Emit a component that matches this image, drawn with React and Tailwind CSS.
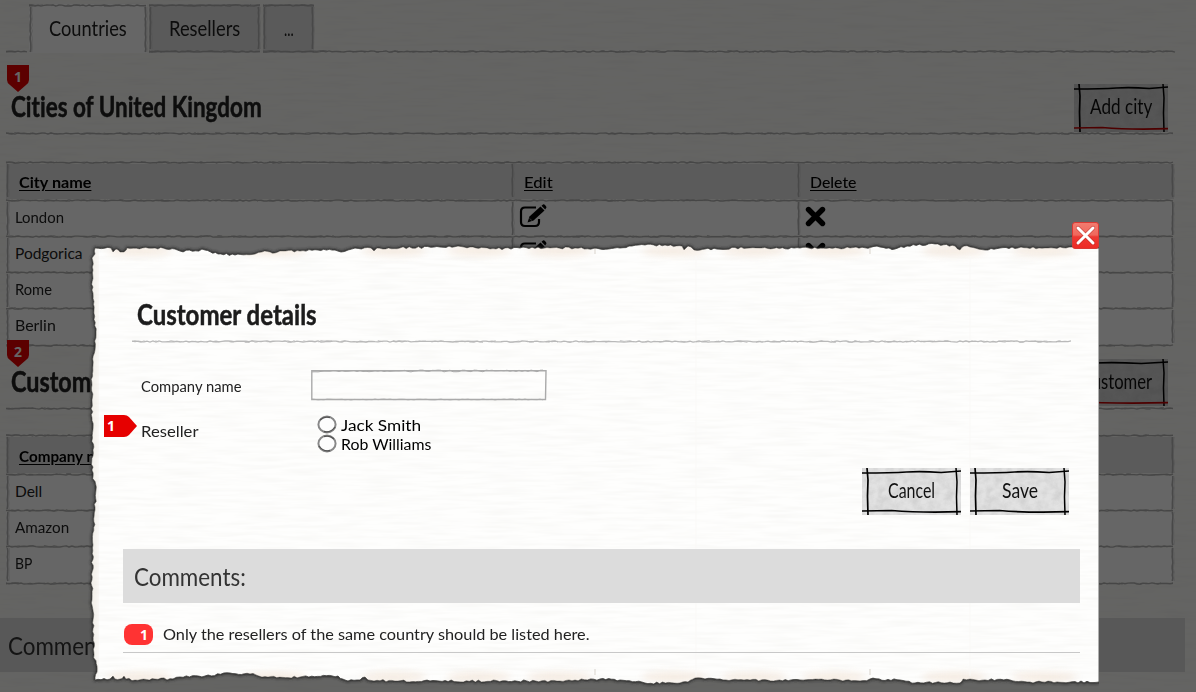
import React, { useLayoutEffect, useRef, useState } from "react";

function makeRandom(seed) {
  let s = seed * 9301 + 49297;
  return () => {
    s = (s * 16807 + 11) % 2147483647;
    return s / 2147483647;
  };
}

// Label whose glyphs are condensed or widened to a set width.
function Label({ w, className = "", children }) {
  const ref = useRef(null);
  const [k, setK] = useState(1);
  useLayoutEffect(() => {
    setK(w / ref.current.offsetWidth);
  }, [w]);
  return (
    <span className="inline-block shrink-0 text-left" style={{ width: w }}>
      <span
        ref={ref}
        className={`inline-block origin-left whitespace-nowrap ${className}`}
        style={{ transform: `scaleX(${k})` }}
      >
        {children}
      </span>
    </span>
  );
}

function wobble(length, seed, amp) {
  const r = makeRandom(seed);
  let d = "";
  for (let i = 0; i <= length; i += 3) {
    d += `${i ? "L" : "M"}${i} ${(1.5 + (r() - 0.5) * amp).toFixed(2)} `;
  }
  return d;
}

function HLine({ w, seed = 1, color = "#b0b0b0", sw = 1.4 }) {
  return (
    <svg width={w} height="3" className="block shrink-0 overflow-visible">
      <path d={wobble(w, seed, 1.2)} fill="none" stroke={color} strokeWidth={sw} />
      <path d={wobble(w, seed + 31, 2)} fill="none" stroke={color} strokeWidth="0.8" strokeDasharray="14 9 5 11" />
    </svg>
  );
}

function VLine({ h, seed = 1, color = "#b3b3b3" }) {
  return (
    <svg width="3" height={h} className="block shrink-0 overflow-visible">
      <g transform="matrix(0 1 1 0 0 0)">
        <path d={wobble(h, seed, 0.8)} fill="none" stroke={color} strokeWidth="1.6" />
        <path d={wobble(h, seed + 7, 1)} transform="translate(0 1.4)" fill="none" stroke="#d2d2d2" strokeWidth="0.7" />
      </g>
    </svg>
  );
}

function PinBadge({ n }) {
  return (
    <div className="relative h-[27px] w-[22px] shrink-0">
      <svg width="22" height="27" className="absolute inset-0">
        <path d="M0 0H22V15Q22 18 19 20L11 27L3 20Q0 18 0 15Z" fill="#e60000" />
      </svg>
      <span className="relative block text-center font-['Open_Sans',sans-serif] text-[14px] leading-[23px] font-bold text-white">
        {n}
      </span>
    </div>
  );
}

function SketchButton({ w, h = 47, textW, bottom = "#000", tone = "#e2e2e2", id, children }) {
  return (
    <button className="relative flex shrink-0 items-center justify-center" style={{ width: w, height: h }}>
      <svg width={w} height={h} className="absolute inset-0">
        <filter id={id}>
          <feTurbulence type="fractalNoise" baseFrequency="0.12 0.14" numOctaves="4" seed="4" />
          <feColorMatrix values="0 0 0 0 0.5  0 0 0 0 0.5  0 0 0 0 0.5  0.7 0.4 0 0 -0.4" />
        </filter>
        <rect width={w} height={h} fill={tone} />
        <rect width={w} height={h} filter={`url(#${id})`} />
        <g fill="none" stroke="#000" strokeWidth="1.7">
          <path d={`M0 5Q${w * 0.3} 5 ${w * 0.45} 4T${w * 0.8} 4.5L${w} 3`} />
          <path d={`M5 0L6 12L5.5 28L6 ${h}`} />
          <path d={`M${w - 5} 0L${w - 4} 14L${w - 4.5} 29L${w - 4} ${h}`} strokeWidth="1.5" />
          <path d={`M0 ${h - 4}L${w * 0.3} ${h - 4.5}Q${w * 0.6} ${h - 2} ${w} ${h - 3.3}`} stroke={bottom} />
        </g>
      </svg>
      <span className="relative -mt-[4px] font-['Lato',sans-serif] text-[21px] leading-6 text-[#111]">
        <Label w={textW}>{children}</Label>
      </span>
    </button>
  );
}

function EditIcon() {
  return (
    <svg width="28" height="24" viewBox="0 0 28 24" className="shrink-0">
      <path d="M17 3.500H6Q2 3.500 2 7.500V18Q2 22 6 22H16Q20 22 20 18V15" fill="none" stroke="#000" strokeWidth="2.200" />
      <path d="M8.500 18.500L10.500 12.500L21.500 2.500L25.500 6.500L14.500 16.500Z" fill="#000" />
      <path d="M22.500 1.800L24 .5Q25 0 26 1L27 2.200Q28 3.300 27 4.300L26.200 5.500Z" fill="#000" />
      <path d="M10.500 14.500L13 16.500" stroke="#777" strokeWidth="1" />
    </svg>
  );
}

function DeleteIcon() {
  return (
    <svg width="21" height="21" viewBox="0 0 21 21" className="shrink-0">
      <path d="M3.500 3.500L17.500 17.500M17.500 3.500L3.500 17.500" stroke="#000" strokeWidth="5.400" strokeLinecap="round" />
    </svg>
  );
}

function Row({ h, seed, first, bg = "bg-white", cells = [null, null] }) {
  return (
    <div className={`flex items-center ${bg}`}>
      <VLine h={h} seed={seed} />
      <div className="flex w-[502px] items-center">{first}</div>
      <VLine h={h} seed={seed + 1} />
      <div className="flex w-[283px] items-center">{cells[0]}</div>
      <VLine h={h} seed={seed + 2} />
      <div className="flex w-[371px] items-center">{cells[1]}</div>
      <VLine h={h} seed={seed + 3} />
    </div>
  );
}

const body = "font-['Lato',sans-serif] text-[15.500px] leading-5 text-[#222]";

function Head({ w, bold, children }) {
  return (
    <div className={`pt-px pl-[10px] ${body}`}>
      <Label w={w} className={bold ? "font-bold text-black underline underline-offset-2" : "font-medium text-black underline underline-offset-2"}>
        {children}
      </Label>
    </div>
  );
}

function Table({ title, titleW, extra, rows, seed, headH }) {
  return (
    <div className="w-[1168px]">
      <HLine w={1168} seed={seed} />
      <Row h={headH} seed={seed + 2} bg="bg-[#e3e3e3]" first={<Head w={titleW} bold>{title}</Head>} cells={extra} />
      <HLine w={1168} seed={seed + 3} />
      {rows.map(([name, w], i) => (
        <React.Fragment key={name}>
          <Row
            h={i === rows.length - 1 ? 34 : 33}
            seed={seed + i * 5 + 8}
            first={
              <div className={`${i === rows.length - 1 ? "-mt-[5px]" : "-mt-[3px]"} pl-[6px] ${body}`}>
                <Label w={w}>{name}</Label>
              </div>
            }
            cells={[
              <div className="-mt-[5px] pl-[5px]"><EditIcon /></div>,
              <div className="-mt-[5px] pl-[5px]"><DeleteIcon /></div>,
            ]}
          />
          <HLine w={1168} seed={seed + i * 3 + 4} />
        </React.Fragment>
      ))}
    </div>
  );
}

function Tab({ w, textW, active, seed, children }) {
  return (
    <div className={`flex flex-col ${active ? "bg-white" : "bg-[#e0e0e0]"}`} style={{ width: w }}>
      <HLine w={w} seed={seed} />
      <div className="flex items-center justify-between">
        <VLine h={active ? 46 : 43} seed={seed} />
        <span className={`font-['Lato',sans-serif] text-[22px] leading-6 text-[#222] ${active ? "-mt-[4px]" : "-mt-px"}`}>
          <Label w={textW}>{children}</Label>
        </span>
        <VLine h={active ? 46 : 43} seed={seed + 4} />
      </div>
      {!active && <HLine w={w} seed={seed + 1} />}
    </div>
  );
}

const TOP = [[95,248],[111,248],[113,252],[116,249],[120,252],[124,252],[127,248],[155,248],[175,249],[180,251],[205,250],[218,254],[235,255],[255,254],[262,252],[270,252],[275,253],[280,251],[300,251],[318,250],[335,250],[341,252],[348,250],[355,248],[371,248],[374,251],[377,248],[400,248],[440,247],[470,247],[490,249],[520,248],[550,248],[575,248],[600,249],[620,248],[632,246],[645,245],[665,245],[682,246],[684,250],[688,246],[694,250],[705,249],[750,248],[800,248],[850,248],[880,247],[895,249],[907,246],[935,244],[955,246],[960,250],[964,246],[970,247],[985,250],[1000,248],[1099,248]];
const BOTTOM = [[1099,682],[1030,682],[1010,680],[985,680],[970,679],[963,679],[960,683],[950,682],[915,683],[900,680],[870,679],[860,681],[840,680],[800,680],[750,680],[705,679],[695,678],[688,682],[680,683],[645,683],[620,680],[600,679],[575,680],[560,681],[430,681],[395,681],[368,680],[365,677],[360,680],[345,680],[338,676],[300,677],[268,677],[250,674],[230,673],[205,676],[180,677],[173,679],[155,679],[135,680],[126,679],[124,676],[120,679],[115,679],[113,676],[110,679],[95,680]];
const LEFT = [[97,672],[94,655],[93,620],[92,600],[92,580],[93,545],[95,510],[96,490],[92,470],[93,450],[92,400],[92,385],[93,365],[95,350],[96,335],[94,310],[92,290],[93,270],[92,258],[95,254]];

function tornPath() {
  const r = makeRandom(17);
  const pts = [...TOP, ...BOTTOM, ...LEFT];
  let d = "";
  pts.forEach(([x, y], i) => {
    const [nx, ny] = pts[(i + 1) % pts.length];
    const straight = x === 1099 && nx === 1099;
    const steps = straight ? 1 : Math.max(1, Math.round(Math.hypot(nx - x, ny - y) / 3));
    for (let k = 0; k < steps; k++) {
      const j = k ? (r() - 0.5) * 2.2 : 0;
      const vertical = Math.abs(ny - y) > Math.abs(nx - x);
      const px = x + ((nx - x) * k) / steps + (vertical ? j : 0) - 84;
      const py = y + ((ny - y) * k) / steps + (vertical ? 0 : j) - 236;
      d += `${d ? "L" : "M"}${px.toFixed(1)} ${py.toFixed(1)}`;
    }
  });
  return d + "Z";
}
const TORN = tornPath();

function Paper() {
  return (
    <svg width="1015" height="456" className="absolute inset-0">
      <defs>
        <clipPath id="torn"><path d={TORN} /></clipPath>
        <filter id="soft" x="-5%" y="-5%" width="110%" height="110%"><feGaussianBlur stdDeviation="1.7" /></filter>
        <filter id="grain" x="0" y="0" width="100%" height="100%">
          <feTurbulence type="fractalNoise" baseFrequency="0.025 0.28" numOctaves="2" seed="8" />
          <feColorMatrix values="0 0 0 0 0.5  0 0 0 0 0.48  0 0 0 0 0.42  0.16 0 0 0 -0.06" />
        </filter>
        <filter id="stain" x="-20%" y="-100%" width="140%" height="300%"><feGaussianBlur stdDeviation="3.5" /></filter>
      </defs>
      <path d={TORN} fill="#222" stroke="#222" strokeWidth="2" filter="url(#soft)" />
      <path d={TORN} fill="#fefefd" stroke="#3a3a38" strokeWidth="0.8" />
      <g clipPath="url(#torn)">
        <rect width="1015" height="456" filter="url(#grain)" />
        <g filter="url(#stain)" fill="#f3e6da" opacity="0.75">
          {[55, 190, 310, 395, 475, 590, 670, 750, 870, 960].map((x) => (
            <g key={x}>
              <ellipse cx={x} cy="15" rx="32" ry="5" />
              <ellipse cx={x} cy="441" rx="32" ry="5" />
            </g>
          ))}
        </g>
        <rect x="4" y="12" width="9" height="430" fill="#eae4dc" opacity="0.6" filter="url(#stain)" />
        <path d="M612 20V440M886 20V440" stroke="#faf9f7" />
        <path d="M511 11v7M786 11v7M511 433v6M786 433v6" stroke="#c8c2b7" strokeWidth="0.7" />
      </g>
    </svg>
  );
}

function Radio({ flip }) {
  return (
    <svg width="20" height="19" viewBox="0 0 20 19" className={flip ? "-scale-x-100" : ""}>
      <ellipse cx="10" cy="9.500" rx="8.600" ry="7.900" fill="#fdfdfd" stroke="#888" strokeWidth="2" />
      <path d="M3 5Q7 1 13 2.500M18 12Q14 18 7 16.500" fill="none" stroke="#555" strokeWidth="1.300" />
    </svg>
  );
}

function RadioRow({ w, flip, children }) {
  return (
    <label className={`flex h-[19px] items-center gap-[4px] ${body}`}>
      <Radio flip={flip} />
      <span className="text-black"><Label w={w}>{children}</Label></span>
    </label>
  );
}

function Dialog() {
  return (
    <section className="absolute top-[236px] left-[84px] h-[456px] w-[1015px]">
      <Paper />
      <div className="relative flex flex-col pt-[60px]">
        <h2 className="h-[44px] pl-[53px] font-['Lato',sans-serif] text-[28px] leading-[36px] font-bold text-[#1c1c1c] [-webkit-text-stroke:0.5px_#1c1c1c]">
          <Label w={180}>Customer details</Label>
        </h2>
        <div className="pl-[48px]"><HLine w={939} seed={12} color="#b9b9b9" sw={1.3} /></div>
        <div className="mt-[25px] flex h-[34px] items-center pl-[57px]">
          <div className={`w-[170px] pt-[2px] ${body}`}><Label w={100}>Company name</Label></div>
          <div className="relative h-[32px] w-[236px]">
            <svg width="236" height="32" className="absolute inset-0">
              <path d="M.8 1.800L235 1.800L234.500 30.500L.8 30.500Z" fill="none" stroke="#aaa" strokeWidth="1.400" />
              <path d={wobble(233, 22, 1.8)} transform="translate(1 .5)" fill="none" stroke="#aaa" />
              <path d={wobble(233, 23, 1.2)} transform="translate(1 29)" fill="none" stroke="#aaa" strokeWidth=".7" />
            </svg>
            <input className="relative h-full w-full bg-transparent px-2 outline-none" />
          </div>
        </div>
        <div className="mt-[13px] flex h-[40px] pl-[20px]">
          <div className="relative h-[22px] w-[33px]">
            <svg width="33" height="22" className="absolute inset-0">
              <path d="M0 0H20Q23 0 25 2L33 11L25 20Q23 22 20 22H0Z" fill="#e60000" />
            </svg>
            <span className="relative block pl-[3px] font-['Open_Sans',sans-serif] text-[14px] leading-[22px] font-bold text-white">1</span>
          </div>
          <div className={`w-[180px] pt-[6px] pl-[4px] ${body}`}><Label w={57}>Reseller</Label></div>
          <div className="flex flex-col">
            <RadioRow w={80}>Jack Smith</RadioRow>
            <RadioRow w={90} flip>Rob Williams</RadioRow>
          </div>
        </div>
        <div className="mt-[13px] flex justify-end gap-[9px] pr-[30px]">
          <SketchButton w={99} textW={47} id="b1">Cancel</SketchButton>
          <SketchButton w={99} textW={36} id="b2">Save</SketchButton>
        </div>
        <div className="mt-[34px] ml-[39px] flex h-[54px] w-[957px] items-center bg-[#dcdcdc] pt-px pl-[11px] font-['Lato',sans-serif] text-[25px] text-[#333]">
          <Label w={112}>Comments:</Label>
        </div>
        <div className="ml-[39px] flex h-[50px] w-[957px] items-center border-b border-[#c8c8c8] pt-[14px] pl-px">
          <span className="h-[21px] w-[29px] rounded-[8px] bg-[#ff3333] pr-[5px] text-right font-['Open_Sans',sans-serif] text-[14px] leading-[21px] font-bold text-white">1</span>
          <div className={`-mt-px pl-[10px] ${body}`}>
            <Label w={426}>Only the resellers of the same country should be listed here.</Label>
          </div>
        </div>
      </div>
      <button aria-label="Close" className="absolute top-[-14px] left-[988px] h-[27px] w-[27px]">
        <svg width="27" height="27" viewBox="0 0 27 27">
          <defs>
            <linearGradient id="closeFill" x2="0" y2="1">
              <stop offset="0" stopColor="#f17c70" />
              <stop offset=".48" stopColor="#f0685c" />
              <stop offset=".55" stopColor="#ed3932" />
              <stop offset="1" stopColor="#ee2b25" />
            </linearGradient>
          </defs>
          <rect x=".5" y=".5" width="26" height="26" rx="2.500" fill="url(#closeFill)" stroke="#d93a34" />
          <path d="M6 6L21 21M21 6L6 21" stroke="#b3221e" strokeWidth="4.200" strokeLinecap="round" opacity=".6" />
          <path d="M6 6L21 21M21 6L6 21" stroke="#fff" strokeWidth="3" strokeLinecap="round" />
        </svg>
      </button>
    </section>
  );
}

function SectionTitle({ n, title, w, action }) {
  return (
    <div className="flex h-[67px] w-[1168px] justify-between">
      <div className="flex flex-col pl-px">
        <PinBadge n={n} />
        <h2 className="-mt-[4px] pl-[4px] font-['Lato',sans-serif] text-[29px] leading-[36px] font-bold text-[#222] [-webkit-text-stroke:0.5px_#222]">
          <Label w={w}>{title}</Label>
        </h2>
      </div>
      <div className="pt-[19px] pr-[6px]">{action}</div>
    </div>
  );
}

export default function App() {
  return (
    <main className="relative h-[692px] w-[1196px] overflow-hidden bg-[#fbfbf8] [font-variant-ligatures:none]">
      <svg width="1196" height="692" className="absolute inset-0">
        <filter id="pageGrain" x="0" y="0" width="100%" height="100%">
          <feTurbulence type="fractalNoise" baseFrequency="0.025 0.28" numOctaves="2" seed="3" />
          <feColorMatrix values="0 0 0 0 0.5  0 0 0 0 0.48  0 0 0 0 0.42  0.18 0 0 0 -0.065" />
        </filter>
        <rect width="1196" height="692" filter="url(#pageGrain)" />
      </svg>
      <div className="relative flex flex-col">
        <div className="flex h-[53px] items-end pl-[6px]">
          <HLine w={23} seed={2} />
          <Tab w={118} textW={78} active seed={5}>Countries</Tab>
          <div className="w-[2px]" />
          <Tab w={111} textW={71} seed={6}>Resellers</Tab>
          <div className="w-[3px]" />
          <Tab w={51} textW={10} seed={7}>...</Tab>
          <HLine w={861} seed={8} />
        </div>
        <div className="pt-[12px] pl-[6px]">
          <SectionTitle n="1" title="Cities of United Kingdom" w={251} action={<SketchButton w={94} h={48} textW={62} bottom="#c00000" tone="#d6d6d6" id="b3">Add city</SketchButton>} />
          <HLine w={1168} seed={9} />
          <div className="h-[26px]" />
          <Table
            title="City name"
            titleW={72}
            headH={35}
            seed={20}
            extra={[<Head w={29}>Edit</Head>, <Head w={47}>Delete</Head>]}
            rows={[["London", 49], ["Podgorica", 68], ["Rome", 37], ["Berlin", 41]]}
          />
        </div>
        <div className="-mt-[7px] pl-[6px]">
          <SectionTitle n="2" title="Customers" w={112} action={<SketchButton w={134} textW={102} bottom="#c00000" tone="#d6d6d6" id="b4">Add customer</SketchButton>} />
          <HLine w={1168} seed={14} />
          <div className="h-[24px]" />
          <Table
            title="Company name"
            titleW={105}
            headH={36}
            seed={50}
            extra={[null, null]}
            rows={[["Dell", 27], ["Amazon", 54], ["BP", 17]]}
          />
        </div>
        <div className="mt-[33px] flex h-[54px] w-[1185px] items-center bg-[#dcdcdc] pt-px pl-[8px] font-['Lato',sans-serif] text-[25px] text-[#333]">
          <Label w={112}>Comments:</Label>
        </div>
      </div>
      <div className="absolute inset-0 bg-black/60" />
      <Dialog />
    </main>
  );
}
